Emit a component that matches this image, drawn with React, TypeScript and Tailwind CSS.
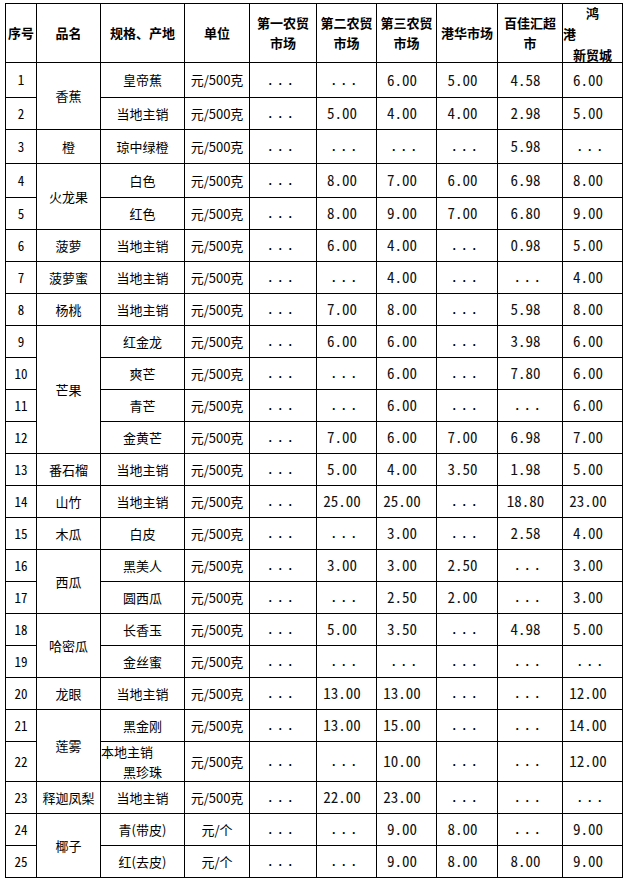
import React from "react";

type Row = {
  n: number;
  name?: string;
  span?: number;
  spec: React.ReactNode;
  unit?: string;
  v: string[];
};

const rows: Row[] = [
  { n: 1, name: "香蕉", span: 2, spec: "皇帝蕉", v: ["...", "...", "6.00", "5.00", "4.58", "6.00"] },
  { n: 2, spec: "当地主销", v: ["...", "5.00", "4.00", "4.00", "2.98", "5.00"] },
  { n: 3, name: "橙", spec: "琼中绿橙", v: ["...", "...", "...", "...", "5.98", "..."] },
  { n: 4, name: "火龙果", span: 2, spec: "白色", v: ["...", "8.00", "7.00", "6.00", "6.98", "8.00"] },
  { n: 5, spec: "红色", v: ["...", "8.00", "9.00", "7.00", "6.80", "9.00"] },
  { n: 6, name: "菠萝", spec: "当地主销", v: ["...", "6.00", "4.00", "...", "0.98", "5.00"] },
  { n: 7, name: "菠萝蜜", spec: "当地主销", v: ["...", "...", "4.00", "...", "...", "4.00"] },
  { n: 8, name: "杨桃", spec: "当地主销", v: ["...", "7.00", "8.00", "...", "5.98", "8.00"] },
  { n: 9, name: "芒果", span: 4, spec: "红金龙", v: ["...", "6.00", "6.00", "...", "3.98", "6.00"] },
  { n: 10, spec: "爽芒", v: ["...", "...", "6.00", "...", "7.80", "6.00"] },
  { n: 11, spec: "青芒", v: ["...", "...", "6.00", "...", "...", "6.00"] },
  { n: 12, spec: "金黄芒", v: ["...", "7.00", "6.00", "7.00", "6.98", "7.00"] },
  { n: 13, name: "番石榴", spec: "当地主销", v: ["...", "5.00", "4.00", "3.50", "1.98", "5.00"] },
  { n: 14, name: "山竹", spec: "当地主销", v: ["...", "25.00", "25.00", "...", "18.80", "23.00"] },
  { n: 15, name: "木瓜", spec: "白皮", v: ["...", "...", "3.00", "...", "2.58", "4.00"] },
  { n: 16, name: "西瓜", span: 2, spec: "黑美人", v: ["...", "3.00", "3.00", "2.50", "...", "3.00"] },
  { n: 17, spec: "圆西瓜", v: ["...", "...", "2.50", "2.00", "...", "3.00"] },
  { n: 18, name: "哈密瓜", span: 2, spec: "长香玉", v: ["...", "5.00", "3.50", "...", "4.98", "5.00"] },
  { n: 19, spec: "金丝蜜", v: ["...", "...", "...", "...", "...", "..."] },
  { n: 20, name: "龙眼", spec: "当地主销", v: ["...", "13.00", "13.00", "...", "...", "12.00"] },
  { n: 21, name: "莲雾", span: 2, spec: "黑金刚", v: ["...", "13.00", "15.00", "...", "...", "14.00"] },
  {
    n: 22,
    spec: (
      <div className="w-full self-stretch flex flex-col justify-center leading-[20px]">
        <div className="text-left">本地主销</div>
        <div className="text-left pl-[22px]">黑珍珠</div>
      </div>
    ),
    v: ["...", "...", "10.00", "...", "...", "12.00"],
  },
  { n: 23, name: "释迦凤梨", spec: "当地主销", v: ["...", "22.00", "23.00", "...", "...", "..."] },
  { n: 24, name: "椰子", span: 2, spec: "青(带皮)", unit: "元/个", v: ["...", "...", "9.00", "8.00", "...", "9.00"] },
  { n: 25, spec: "红(去皮)", unit: "元/个", v: ["...", "...", "9.00", "8.00", "8.00", "9.00"] },
];

const cell = "border-r border-b border-black flex items-center justify-center text-center";
const cjk = "font-['Noto_Sans_CJK_SC',sans-serif]";
const mono = "font-['Noto_Sans_Mono_CJK_SC','DejaVu_Sans_Mono',monospace]";

function Val({ v }: { v: string }) {
  if (v === "...") {
    return (
      <div className={`${cell} ${mono} text-[15px] tracking-[2.5px] pr-[3px] text-black`}>
        <span className="relative top-[-1px]">...</span>
      </div>
    );
  }
  return <div className={`${cell} ${mono} text-[15px] pr-[9px] text-[#111]`}>{v}</div>;
}

export default function App() {
  return (
    <div className="w-[627px] min-h-[881px] bg-white pt-[3px] pl-[5px]">
      <div
        className={`grid w-[618px] border-l border-t border-black text-black ${cjk} text-[13px] grid-cols-[31px_64px_84px_65px_67px_60px_60px_61px_65px_60px] grid-rows-[59px_35px_32px_34px_34px_repeat(17,32px)_40px_repeat(3,32px)]`}
      >
        {/* header */}
        <div className={`${cell} font-bold`}>序号</div>
        <div className={`${cell} font-bold`}>品名</div>
        <div className={`${cell} font-bold`}>规格、产地</div>
        <div className={`${cell} font-bold`}>单位</div>
        <div className={`${cell} font-bold flex-col leading-[20px]`}>
          <div>第一农贸</div>
          <div>市场</div>
        </div>
        <div className={`${cell} font-bold flex-col leading-[20px]`}>
          <div>第二农贸</div>
          <div>市场</div>
        </div>
        <div className={`${cell} font-bold flex-col leading-[20px]`}>
          <div>第三农贸</div>
          <div>市场</div>
        </div>
        <div className={`${cell} font-bold`}>港华市场</div>
        <div className={`${cell} font-bold flex-col leading-[20px]`}>
          <div>百佳汇超</div>
          <div>市</div>
        </div>
        <div className={`${cell} font-bold flex-col leading-[21px] items-stretch`}>
          <div className="text-center">鸿</div>
          <div className="text-left">港</div>
          <div className="text-center">新贸城</div>
        </div>

        {rows.map((r) => (
          <React.Fragment key={r.n}>
            <div className={`${cell} ${mono} text-[13px]`}>{r.n}</div>
            {r.name !== undefined &&
              (r.span === 4 ? (
                <div className={`${cell} row-span-4`}>{r.name}</div>
              ) : r.span === 2 ? (
                <div className={`${cell} row-span-2`}>{r.name}</div>
              ) : (
                <div className={cell}>{r.name}</div>
              ))}
            <div className={cell}>{r.spec}</div>
            <div className={cell}>{r.unit ?? "元/500克"}</div>
            {r.v.map((v, i) => (
              <Val key={i} v={v} />
            ))}
          </React.Fragment>
        ))}
      </div>
    </div>
  );
}
